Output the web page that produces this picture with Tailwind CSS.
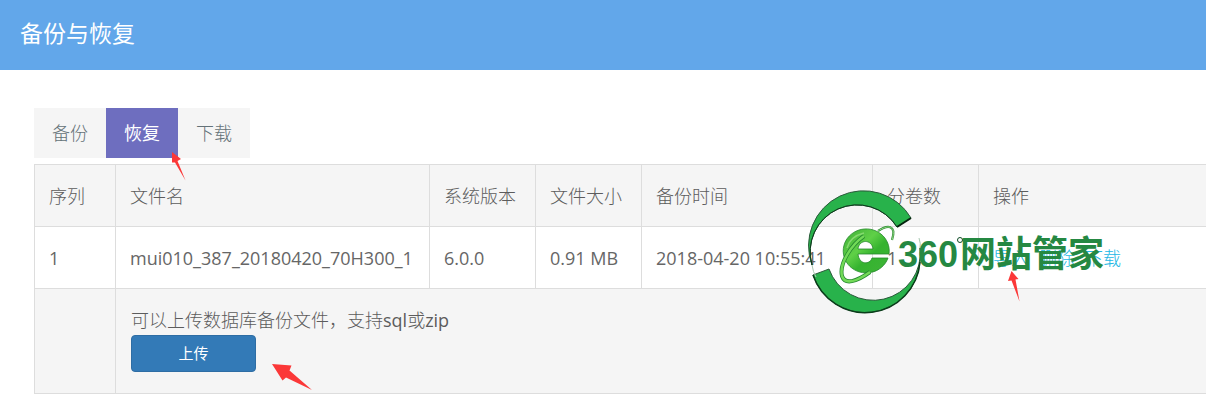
<!DOCTYPE html>
<html lang="zh-CN">
  <head>
    <meta charset="UTF-8" />
    <title>备份与恢复</title>
    <meta name="viewport" content="width=device-width, initial-scale=1.0" />
    <script src="https://cdn.jsdelivr.net/npm/@tailwindcss/browser@4"></script>
  </head>
  <body
    class="relative overflow-x-hidden bg-white text-[#5c5c5c] font-['Open_Sans','Noto_Sans_CJK_SC',sans-serif]"
  >
    <header class="flex h-[70px] items-center bg-[#62a7ea] px-5 pb-1">
      <h1 class="text-[23px] leading-8 text-white">备份与恢复</h1>
    </header>

    <main class="pt-[38px] pl-[34px]">
      <nav class="mb-1.5 flex text-lg leading-[50px] font-light">
        <a href="#backup" class="bg-[#f5f5f5] px-[18px] text-[#647278]">备份</a>
        <a href="#restore" class="bg-[#6e6ebf] px-[18px] font-normal text-white">恢复</a>
        <a href="#download" class="bg-[#f5f5f5] px-[18px] text-[#647278]">下载</a>
      </nav>

      <table class="w-full table-fixed border-collapse border-y border-l border-[#ddd] text-left text-lg">
        <colgroup>
          <col class="w-[81px]" />
          <col class="w-[314px]" />
          <col class="w-[106px]" />
          <col class="w-[106px]" />
          <col class="w-[231px]" />
          <col class="w-[106px]" />
          <col />
        </colgroup>
        <thead>
          <tr class="h-[62px] bg-[#f5f5f5]">
            <th class="border-r border-b border-[#ddd] px-3.5 font-light">序列</th>
            <th class="border-r border-b border-[#ddd] px-3.5 font-light">文件名</th>
            <th class="border-r border-b border-[#ddd] px-3.5 font-light">系统版本</th>
            <th class="border-r border-b border-[#ddd] px-3.5 font-light">文件大小</th>
            <th class="border-r border-b border-[#ddd] px-3.5 font-light">备份时间</th>
            <th class="border-r border-b border-[#ddd] px-3.5 font-light">分卷数</th>
            <th class="border-b border-[#ddd] px-3.5 font-light">操作</th>
          </tr>
        </thead>
        <tbody>
          <tr class="h-[62px] whitespace-nowrap text-[#666]">
            <td class="border-r border-b border-[#ddd] px-3.5">1</td>
            <td class="border-r border-b border-[#ddd] px-3.5">mui010_387_20180420_70H300_1</td>
            <td class="border-r border-b border-[#ddd] px-3.5">6.0.0</td>
            <td class="border-r border-b border-[#ddd] px-3.5">0.91 MB</td>
            <td class="border-r border-b border-[#ddd] px-3.5">2018-04-20 10:55:41</td>
            <td class="border-r border-b border-[#ddd] px-3.5">1</td>
            <td class="border-b border-[#ddd] px-3.5">
              <div class="flex gap-2.5 font-light text-[#23b7e5]">
                <a href="#import">导入</a>
                <a href="#delete">删除</a>
                <a href="#get">下载</a>
              </div>
            </td>
          </tr>
          <tr class="bg-[#f5f5f5]">
            <td class="border-r border-[#ddd]"></td>
            <td colspan="6" class="px-[15px] pt-4 pb-[21px]">
              <p class="leading-[30px] font-light">
                可以上传数据库备份文件，支持<span class="font-normal">sql</span>或<span class="font-normal">zip</span>
              </p>
              <button
                type="button"
                class="block h-[37px] w-[125px] rounded border border-[#2e6da4] bg-[#337ab7] text-[15px] text-white"
              >
                上传
              </button>
            </td>
          </tr>
        </tbody>
      </table>
    </main>

    <!-- pointer arrows -->
    <svg class="pointer-events-none absolute top-[152px] left-[172px]" width="14" height="29" fill="#fb3838">
      <path d="M0 0 9 7 5.500 9 13.500 28.500 3 10.500 0 10.500Z" />
    </svg>
    <svg class="pointer-events-none absolute top-[271px] left-[1008px]" width="12" height="31" fill="#fb3838">
      <path d="M3.500 0 10.500 8 7.500 8.500 11.500 30.500 3.500 9.500 0 10Z" />
    </svg>
    <svg class="pointer-events-none absolute top-[364px] left-[272px]" width="41" height="27" fill="#fb3838">
      <path d="M0 0 19.500 1.500 17.500 6.500 40 26 14 13.500 10.500 16.500Z" />
    </svg>

    <!-- 360网站管家 watermark -->
    <div class="pointer-events-none absolute top-[188px] left-[804px] flex items-center">
      <svg width="120" height="126" viewBox="0 0 120 126" fill="none">
        <defs>
          <linearGradient id="leaf" x1="0" y1="0" x2="1" y2="1">
            <stop offset="0" stop-color="#3fae37" />
            <stop offset=".4" stop-color="#5fd047" />
            <stop offset=".6" stop-color="#35b32f" />
            <stop offset="1" stop-color="#3fb438" />
          </linearGradient>
        </defs>
        <!-- ring halves -->
        <g fill="#28b24b" stroke="#2c5a3b" stroke-width="1" stroke-linejoin="round">
          <path d="M107 30 93 39A47 47 0 0 0 8 77A55 55 0 0 1 107 30Z" />
          <path d="M9 87 25 81A47 47 0 0 0 116 60Q118 67 116 74A55 55 0 0 1 9 87Z" />
        </g>
        <path d="M8 77Q9 84 12 89M116 60Q117 56 115 50" stroke="#a9c9b3" />
        <path d="M107 30 93 39" stroke="#06240f" stroke-width="2" />
        <path d="M116 74A55 55 0 0 1 9 87" stroke="#0a3d1a" stroke-width="1.500" />
        <path d="M93 39A47 47 0 0 0 8 77" stroke="#0a3d1a" stroke-width="1" />
        <!-- browser "e" with its orbit -->
        <path
          d="M85 66A23 22 0 1 0 84 70H68C66 77 55 77 54 66ZM54 61H69C68 51 55 51 54 61Z"
          fill="url(#leaf)"
          fill-rule="evenodd"
          stroke="#26882d"
          stroke-width=".800"
        />
        <path d="M74 43C83 37 93 36 88 52" stroke="#2b8b31" stroke-width="2.200" />
        <path d="M74 43C83 37 93 36 88 52" stroke="#8fd584" stroke-width="1" />
        <path d="M60 48C47 57 35 76 38 88 41 97 52 94 66 84" stroke="#258830" stroke-width="4" />
        <path d="M60 48C47 57 35 76 38 88 41 97 52 94 66 84" stroke="#72d957" stroke-width="2.500" />
        <path d="M43 60C45 52 52 47 60 45" stroke="#86d970" stroke-width="1.500" />
      </svg>
      <p class="relative -ml-[26px] flex items-baseline pt-1 text-4xl leading-9 font-bold text-[#258842]">
        <span class="font-['Liberation_Sans',sans-serif]">360</span>
        <span class="ml-[2px] font-['Noto_Sans_CJK_SC',sans-serif]">网站管家</span>
        <span class="absolute top-2 left-[59px] size-[6px] rounded-full border border-[#0d4b25]"></span>
      </p>
    </div>
  </body>
</html>
